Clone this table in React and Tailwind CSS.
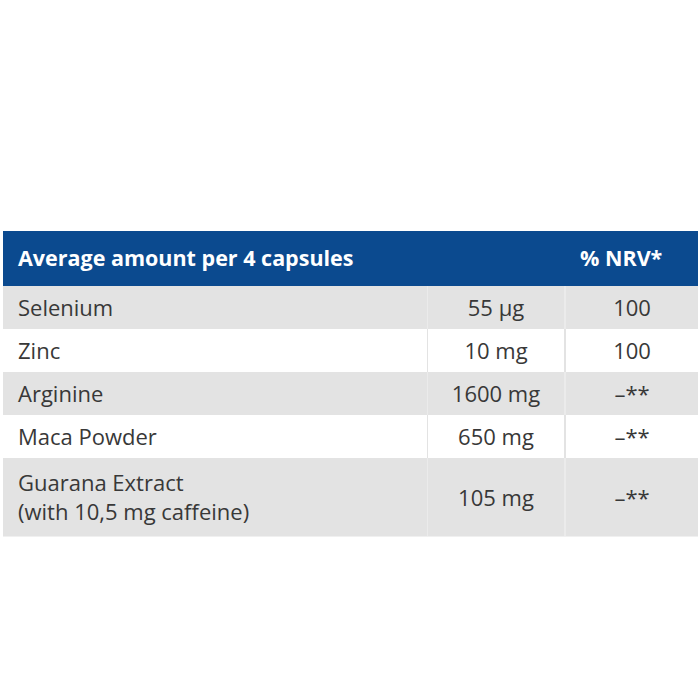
const rows = [
  { name: ['Selenium'], amount: '55 µg', nrv: '100' },
  { name: ['Zinc'], amount: '10 mg', nrv: '100' },
  { name: ['Arginine'], amount: '1600 mg', nrv: '–**' },
  { name: ['Maca Powder'], amount: '650 mg', nrv: '–**' },
  { name: ['Guarana Extract', '(with 10,5 mg caffeine)'], amount: '105 mg', nrv: '–**' },
];

export default function App() {
  return (
    <div
      className="w-[700px] h-[700px] bg-white pt-[231px] pl-[3px]"
      style={{ fontFamily: '"Open Sans", "Noto Sans", sans-serif' }}
    >
      <div className="w-[695px]">
        {/* Header */}
        <div className="grid grid-cols-[563px_132px] h-[55px] bg-[#0b4a8f] text-white text-[21.5px] font-bold items-center">
          <div className="pl-[15px]">Average amount per 4 capsules</div>
          <div className="pl-[14px]">% NRV*</div>
        </div>

        {/* Body */}
        {rows.map((row, i) => {
          const grey = i % 2 === 0;
          const tall = row.name.length > 1;
          return (
            <div
              key={i}
              className={`grid grid-cols-[425px_138px_132px] text-[22px] leading-[29px] text-[#383838] ${
                tall ? 'h-[78px]' : 'h-[43px]'
              } ${grey ? 'bg-[#e3e3e3]' : 'bg-white'}`}
            >
              <div
                className={`flex flex-col justify-center pl-[15px] border-r ${
                  grey ? 'border-[#ebebeb]' : 'border-[#e3e3e3]'
                }`}
              >
                {row.name.map((n) => (
                  <span key={n}>{n}</span>
                ))}
              </div>
              <div
                className={`flex items-center justify-center border-r-2 ${
                  grey ? 'border-[#ebebeb]' : 'border-[#e3e3e3]'
                }`}
              >
                {row.amount}
              </div>
              <div className="flex items-center justify-center">{row.nrv}</div>
            </div>
          );
        })}
        <div className="h-px bg-[#f0f0f0]" />
      </div>
    </div>
  );
}
